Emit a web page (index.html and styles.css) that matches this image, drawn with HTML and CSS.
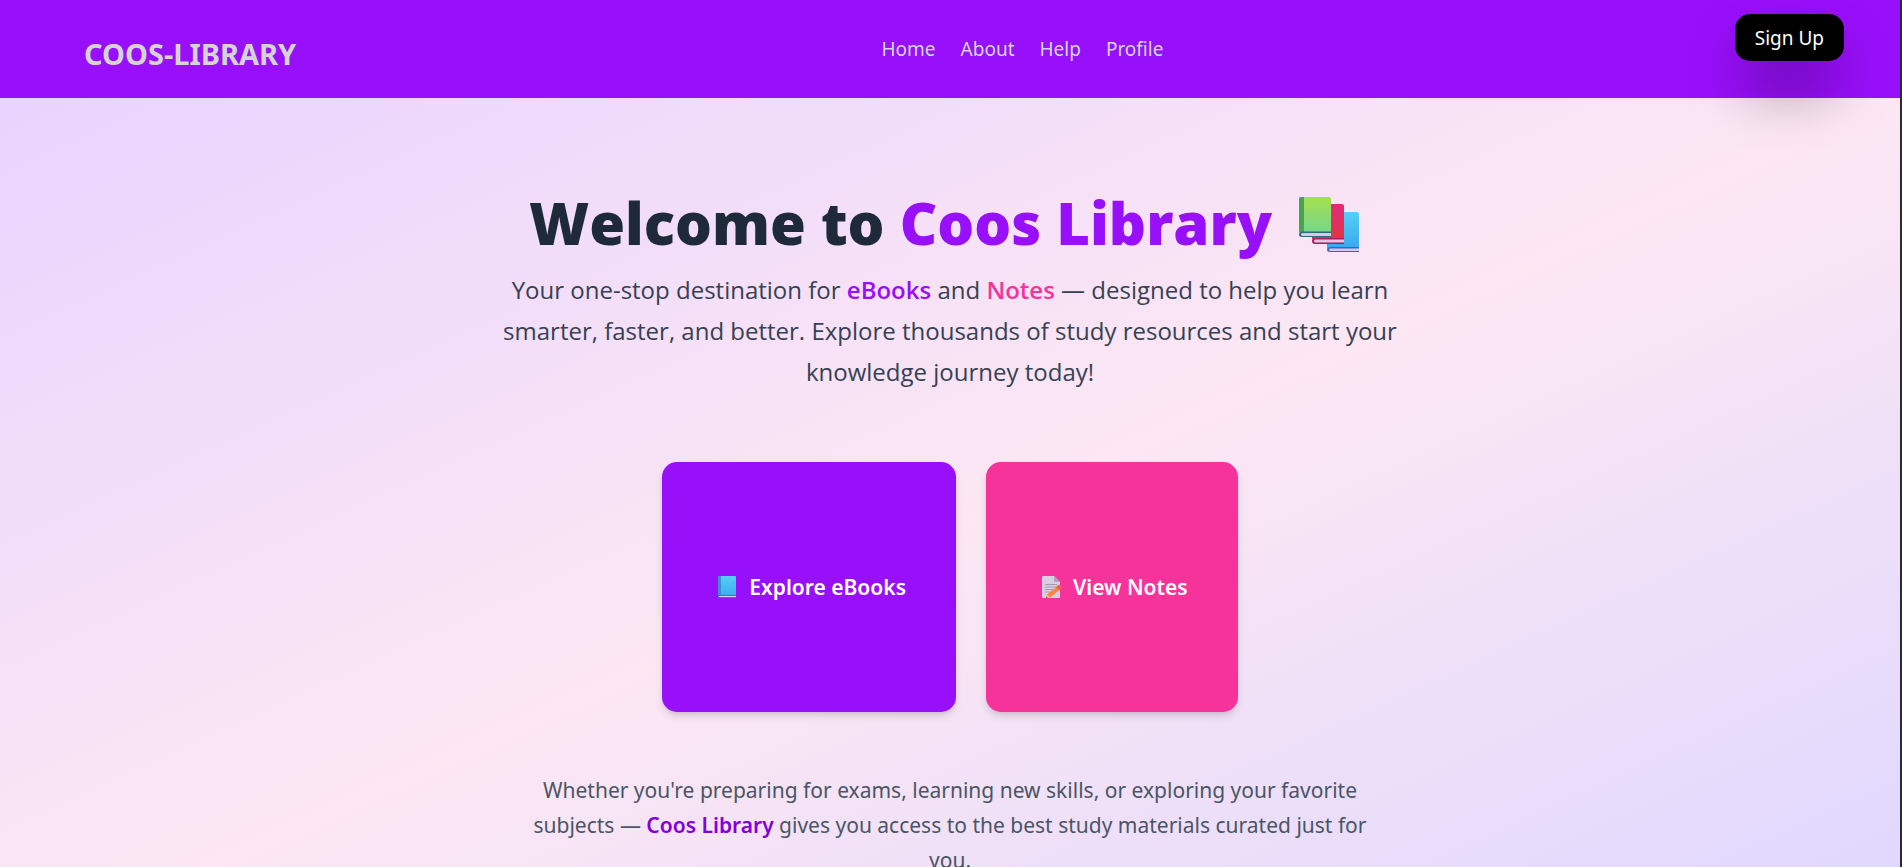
FILE: index.html
```html
<!DOCTYPE html>
<html lang="en">
<head>
<meta charset="utf-8">
<meta name="viewport" content="width=device-width, initial-scale=1">
<title>Coos Library</title>
<link rel="stylesheet" href="styles.css">
</head>
<body>
<header class="header">
  <h2 class="logo">COOS-LIBRARY</h2>
  <nav class="nav">
    <a href="#home">Home</a>
    <a href="#about">About</a>
    <a href="#help">Help</a>
    <a href="#profile">Profile</a>
  </nav>
  <button class="signup" type="button">Sign Up</button>
</header>
<main class="hero">
  <h1 class="title"><span>Welcome to <span class="brand">Coos Library</span></span>
    <svg class="books" viewBox="0 0 60 56" role="img" aria-label="Books">
      <defs>
        <linearGradient id="green" x1="0" y1="0" x2="0" y2="1"><stop offset="0" stop-color="#a5e04f"/><stop offset="1" stop-color="#74d78c"/></linearGradient>
        <linearGradient id="red" x1="0" y1="0" x2="0" y2="1"><stop offset="0" stop-color="#e02c78"/><stop offset="1" stop-color="#e3324a"/></linearGradient>
        <linearGradient id="blue" x1="0" y1="0" x2="0" y2="1"><stop offset="0" stop-color="#54d0f5"/><stop offset="1" stop-color="#38a9ee"/></linearGradient>
      </defs>
      <path d="M28 15h30q2 0 2 2v34H28z" fill="url(#blue)"/>
      <path d="M31 50h29v5H31q-3 0-3-2.500t3-2.500z" fill="#3568c4"/>
      <path d="M31 51.500h29v2.500H31q-2-1 0-2.500z" fill="#dcc6ef"/>
      <path d="M13 7h30q2 0 2 2v33H13z" fill="url(#red)"/>
      <path d="M16 41h29v6H16q-3 0-3-3t3-3z" fill="#ae1d5b"/>
      <path d="M16 42.500h29v3H16q-2-1.500 0-3z" fill="#e3c2e4"/>
      <path d="M2 0h28q2 0 2 2v34H0V2q0-2 2-2z" fill="url(#green)"/>
      <path d="M2 0h3v35H0V2q0-2 2-2z" fill="#47a451"/>
      <path d="M3 34.500h29v5.500H3q-3 0-3-2.500t3-3z" fill="#2b6c72"/>
      <path d="M3 36h29v3H3q-2-1.500 0-3z" fill="#dcc6e9"/>
    </svg>
  </h1>
  <p class="lead">Your one-stop destination for <strong class="purple">eBooks</strong> and <strong class="pink">Notes</strong> — designed to help you learn smarter, faster, and better. Explore thousands of study resources and start your knowledge journey today!</p>
  <div class="cards">
    <a class="card card-purple" href="#ebooks">
      <svg class="icon" viewBox="0 0 20 22" aria-hidden="true">
        <defs><linearGradient id="book" x1="0" y1="0" x2="0" y2="1"><stop offset="0" stop-color="#54d0f5"/><stop offset="1" stop-color="#38a9ee"/></linearGradient></defs>
        <rect width="18" height="22" rx="1" fill="url(#book)"/>
        <path d="M1 0h2v19H0V1q0-1 1-1z" fill="#3a8fd0"/>
        <path d="M0 19h18v3H1q-1 0-1-1z" fill="#3d72cc"/>
        <path d="M1 20h17v1H1z" fill="#dccbf3"/>
      </svg>
      <span>Explore eBooks</span>
    </a>
    <a class="card card-pink" href="#notes">
      <svg class="icon" viewBox="0 0 20 22" aria-hidden="true">
        <path d="M1 0h11l6 6v15q0 1-1 1H1q-1 0-1-1V1q0-1 1-1z" fill="#dacfe2"/>
        <path d="M12 0l6 6h-5q-1 0-1-1z" fill="#b2a3bd"/>
        <path d="M3 8.500h12M3 11h11M3 13.500h8M3 16h5" stroke="#a699b1" fill="none"/>
        <path d="M5 18.500L15 10.500l3 3L8 21.500l-4 .5z" fill="#ff8440"/>
        <path d="M14 11.200L16 9q1-.6 2 0l1.500 1.500q.8 1 0 2L17 14.200z" fill="#f45b52"/>
        <path d="M5 18.500l3 3-4 .5z" fill="#efc29d"/>
        <path d="M4.300 20.500L5.500 22H4z" fill="#433b6b"/>
      </svg>
      <span>View Notes</span>
    </a>
  </div>
  <p class="note">Whether you're preparing for exams, learning new skills, or exploring your favorite subjects — <strong>Coos Library</strong> gives you access to the best study materials curated just for you.</p>
</main>
</body>
</html>
```

FILE: styles.css
```css
* { box-sizing: border-box; }

body {
  margin: 0;
  height: 100vh;
  overflow: hidden;
  border-right: 2px solid #2c2c2e;
  font-family: "Noto Sans", "Open Sans", sans-serif;
  font-size: 19px;
}

h1, h2, p { margin: 0; }
a { color: inherit; text-decoration: none; }
strong { font-weight: 600; }

.header {
  position: relative;
  z-index: 1;
  display: flex;
  justify-content: space-between;
  align-items: flex-start;
  padding: 14px 56px 24px 84px;
  background: #980ffa;
  color: #d1d5dc;
}

.logo {
  padding-top: 20px;
  font-size: 29px;
  line-height: 40px;
  font-weight: 700;
  color: #d4d4d4;
}

.nav {
  display: flex;
  gap: 25px;
  padding: 20px 0 0 14px;
  line-height: 30px;
}

.signup {
  padding: 9px 20px 8px;
  border: 0;
  border-radius: 15px;
  background: #000;
  color: #fff;
  font: inherit;
  line-height: 30px;
  box-shadow: 0 31px 62px -15px #000;
}

.hero {
  display: flex;
  flex-direction: column;
  align-items: center;
  min-height: 100vh;
  padding: 87px 30px 0;
  background: linear-gradient(to bottom right in oklab, #e9d4ff, #fce7f3, #ddd6ff);
  text-align: center;
}

.title {
  display: flex;
  align-items: flex-start;
  gap: 27px;
  padding-right: 12px;
  font-family: "Open Sans", "Noto Sans", sans-serif;
  font-size: 58px;
  line-height: 75px;
  font-weight: 800;
  color: #1e2939;
}

.brand, .purple { color: #980ffa; }
.pink { color: #f6339a; }

.books {
  width: 60px;
  height: 56px;
  margin-top: 12px;
}

.lead {
  max-width: 900px;
  margin-top: 9px;
  font-family: "Open Sans", "Noto Sans", sans-serif;
  font-size: 24px;
  line-height: 41px;
  color: #364153;
}

.cards {
  display: flex;
  gap: 30px;
  margin-top: 70px;
}

.card {
  display: flex;
  align-items: center;
  gap: 11px;
  height: 250px;
  padding: 0 50px 0 56px;
  border-radius: 15px;
  color: #fff;
  font-size: 21px;
  font-weight: 600;
  box-shadow: 0 5px 8px -1px rgb(0 0 0 / 0.12), 0 2px 5px -2px rgb(0 0 0 / 0.12);
}

.card-purple { background: #980ffa; }
.card-pink { background: #f6339a; }

.icon {
  width: 20px;
  height: 22px;
}

.note {
  max-width: 860px;
  margin-top: 61px;
  font-size: 21px;
  line-height: 35px;
  color: #4a5565;
}

.note strong { color: #8200db; }
```
